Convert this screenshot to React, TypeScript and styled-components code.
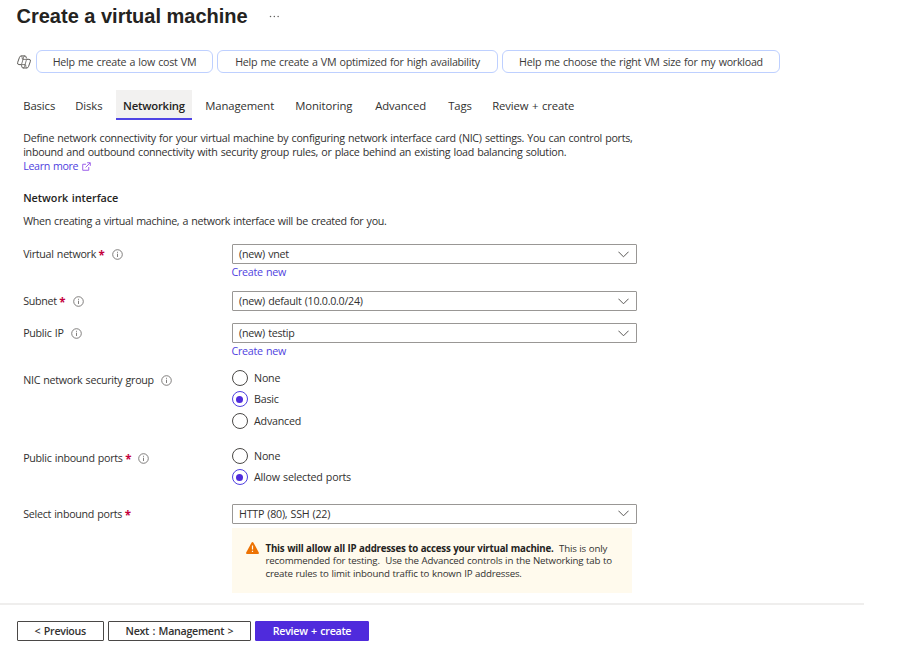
import React from 'react';
import styled, { createGlobalStyle } from 'styled-components';

const Global = createGlobalStyle`
  * { box-sizing: border-box; }
  body {
    margin: 0;
    background: #fff;
    color: #323130;
    font-family: "Open Sans", "Noto Sans", sans-serif;
    font-size: 10.7px;
    letter-spacing: -0.28px;
    word-spacing: 0.7px;
    overflow: hidden;
  }
`;

const Page = styled.div`
  width: 910px;
  height: 669px;
  display: flex;
  flex-direction: column;
`;

const Header = styled.header`
  display: flex;
  align-items: center;
  height: 32px;
  padding-left: 16.5px;
`;

const Title = styled.h1`
  margin: 0;
  width: 252.5px;
  font: bold 20px "Liberation Sans", Arial, sans-serif;
  letter-spacing: 0;
  word-spacing: 0;
  color: #242321;
`;

const Dots = styled.svg`
  display: block;
  fill: #605e5c;
`;

const Suggestions = styled.div`
  display: flex;
  align-items: center;
  gap: 4px;
  height: 23px;
  margin-top: 18px;
  padding-left: 17px;
`;

const CopilotIcon = styled.svg`
  display: block;
  margin-right: 1px;
  fill: none;
  stroke: #55534f;
  stroke-linejoin: round;
`;

const Chip = styled.button<{ $width: number }>`
  width: ${(p) => p.$width}px;
  height: 23px;
  padding: 0;
  border: 1px solid #bed0ff;
  border-radius: 6px;
  background: #fff;
  color: #3b3a39;
  font: inherit;
  letter-spacing: -0.26px;
  word-spacing: 0.7px;
  white-space: nowrap;
`;

const Tabs = styled.nav`
  display: grid;
  grid-template-columns: 52px 48px 82px 90px 80px 73px 44px 100px;
  height: 30px;
  margin: 17px 0 0 16px;
`;

const Tab = styled.a<{ $active?: boolean }>`
  justify-self: start;
  height: 30px;
  padding: 0 0 0 7.2px;
  line-height: 31px;
  font-size: 11.3px;
  letter-spacing: -0.1px;
  white-space: nowrap;
  ${(p) =>
    p.$active &&
    `width: 76px; padding-left: 7px; font-weight: 600; letter-spacing: -0.2px; color: #242321;
     background: #f2f1f0; border-bottom: 2px solid #4f44e4;`}
`;

const Content = styled.main`
  padding-left: 23.2px;
  height: 483px;
`;

const Intro = styled.p`
  margin: 11px 0 0;
  height: 43px;
  line-height: 14.2px;
  white-space: nowrap;
`;

const Link = styled.a`
  color: #4f3fe0;
`;

const LearnMore = styled(Link)`
  letter-spacing: -0.36px;
`;

const ExternalIcon = styled.svg`
  margin-left: 4px;
  vertical-align: -1px;
  fill: none;
  stroke: #9350e8;
`;

const Heading = styled.h2`
  margin: 15.5px 0 0;
  font-size: 10.8px;
  font-weight: 600;
  line-height: 16px;
  letter-spacing: -0.02px;
  color: #242321;
`;

const Note = styled.p`
  margin: 7.5px 0 0;
  height: 31px;
  line-height: 16px;
  letter-spacing: -0.31px;
`;

const Field = styled.section<{ $height: number }>`
  display: grid;
  grid-template-columns: 208.4px 405.4px;
  align-items: start;
  height: ${(p) => p.$height}px;
`;

const Label = styled.label`
  display: flex;
  align-items: center;
  height: 20px;
`;

const Required = styled.span`
  margin-left: 2.5px;
  padding-top: 3px;
  color: #c4003c;
  font-size: 11.5px;
  font-weight: 700;
  line-height: 17px;
`;

const InfoIcon = styled.svg`
  margin: 1px 0 0 7.3px;
  fill: none;
  stroke: #73716f;
`;

const Select = styled.div`
  display: flex;
  align-items: center;
  justify-content: space-between;
  height: 20px;
  padding: 0 6.5px;
  border: 1px solid #999795;
  border-radius: 1px;
  letter-spacing: -0.26px;
`;

const Chevron = styled.svg`
  display: block;
  fill: none;
  stroke: #5a5856;
`;

const CreateNew = styled(Link)`
  display: block;
  line-height: 16px;
`;

const Radios = styled.div`
  display: flex;
  flex-direction: column;
  gap: 5.8px;
`;

const RadioRow = styled.label`
  display: flex;
  align-items: center;
  gap: 6.5px;
  height: 16px;
  line-height: 14px;
  letter-spacing: -0.22px;
`;

const Circle = styled.span<{ $on?: boolean }>`
  display: grid;
  place-items: center;
  width: 16px;
  height: 16px;
  border: 1px solid ${(p) => (p.$on ? '#4f3fe0' : '#4a4846')};
  border-radius: 50%;

  &::after {
    content: '';
    width: 7px;
    height: 7px;
    border-radius: 50%;
    background: ${(p) => (p.$on ? '#4f2bdc' : 'transparent')};
  }
`;

const Warning = styled.div`
  display: flex;
  width: 400px;
  height: 65.5px;
  margin-top: 4px;
  padding: 14px 0 0 14px;
  gap: 7px;
  background: #fffaed;
  font-size: 9.7px;
  line-height: 12.7px;
  letter-spacing: -0.18px;
  word-spacing: 0.4px;
  white-space: pre;

  b {
    letter-spacing: -0.22px;
    color: #242321;
  }
`;

const WarningText = styled.div`
  padding-top: 1px;
`;

const Footer = styled.footer`
  display: flex;
  gap: 4px;
  width: 864px;
  padding: 16px 0 0 16.5px;
  border-top: 2px solid #efeeed;
`;

const Button = styled.button<{ $width: number; $primary?: boolean }>`
  width: ${(p) => p.$width}px;
  height: 20px;
  padding: 0 0 1px;
  border: 1px solid ${(p) => (p.$primary ? '#4f2bdc' : '#4a4846')};
  border-radius: 1px;
  background: ${(p) => (p.$primary ? '#4f2bdc' : '#fff')};
  color: ${(p) => (p.$primary ? '#fff' : '#323130')};
  font: inherit;
  font-weight: 600;
  letter-spacing: -0.3px;
  word-spacing: 1px;
  white-space: nowrap;
`;

const Info = () => (
  <InfoIcon width="11" height="11" viewBox="0 0 11 11">
    <circle cx="5.5" cy="5.5" r="4.8" strokeWidth="0.9" />
    <path d="M5.5 4.7V8M5.5 2.8v1" strokeWidth="0.9" />
  </InfoIcon>
);

const Dropdown = ({ value }: { value: string }) => (
  <Select>
    {value}
    <Chevron width="11" height="7" viewBox="0 0 11 7">
      <path d="M.4.7 5.5 5.8 10.6.7" />
    </Chevron>
  </Select>
);

const Radio = ({ text, on }: { text: string; on?: boolean }) => (
  <RadioRow>
    <Circle $on={on} />
    {text}
  </RadioRow>
);

const tabs = ['Basics', 'Disks', 'Networking', 'Management', 'Monitoring', 'Advanced', 'Tags', 'Review + create'];

export default function App() {
  return (
    <Page>
      <Global />
      <Header>
        <Title>Create a virtual machine</Title>
        <Dots width="11" height="3" viewBox="0 0 11 3">
          <circle cx="1.5" cy="1.5" r=".75" />
          <circle cx="5.3" cy="1.5" r=".75" />
          <circle cx="9.1" cy="1.5" r=".75" />
        </Dots>
      </Header>
      <Suggestions>
        <CopilotIcon width="14" height="14" viewBox="0 0 14 14">
          <path d="M4.3.9h3.6q1 0 1.2 1.100l.3 1.400M4.300.9Q3 .9 2.500 2.300L.7 7.300Q.1 9.600 1.900 9.600h2M9.700 13H6.100q-1 0-1.200-1.100l-.4-1.700M9.700 13q1.300 0 1.800-1.400l1.800-5q.6-2.300-1.200-2.300h-2" strokeWidth=".95" />
          <path d="M7.900.9Q7 .9 6.600 2.200L4.900 8.300Q4.500 9.600 3.500 9.600M6.100 13q1 0 1.400-1.300l1.700-6.100q.4-1.300 1.400-1.300M5.800 4.400h4.300M3.900 9.600h4.200M4.300 1q.8.200.8 1.300l.3 2M9.700 12.900q-.8-.2-.8-1.300l-.3-2" strokeWidth=".75" />
        </CopilotIcon>
        <Chip $width={177}>Help me create a low cost VM</Chip>
        <Chip $width={281}>Help me create a VM optimized for high availability</Chip>
        <Chip $width={278}>Help me choose the right VM size for my workload</Chip>
      </Suggestions>
      <Tabs>
        {tabs.map((t) => (
          <Tab key={t} $active={t === 'Networking'}>{t}</Tab>
        ))}
      </Tabs>
      <Content>
        <Intro>
          Define network connectivity for your virtual machine by configuring network interface card (NIC) settings. You can control ports,
          <br />
          inbound and outbound connectivity with security group rules, or place behind an existing load balancing solution.
          <br />
          <LearnMore>
            Learn more
            <ExternalIcon width="9" height="9" viewBox="0 0 10 10">
              <path d="M4.5 2.5H.8v6.700h6.700V5.500M4 6l5-5M5.700.8h3.500v3.500" />
            </ExternalIcon>
          </LearnMore>
        </Intro>
        <Heading>Network interface</Heading>
        <Note>When creating a virtual machine, a network interface will be created for you.</Note>
        <Field $height={47}>
          <Label>Virtual network<Required>*</Required><Info /></Label>
          <div>
            <Dropdown value="(new) vnet" />
            <CreateNew>Create new</CreateNew>
          </div>
        </Field>
        <Field $height={32}>
          <Label>Subnet<Required>*</Required><Info /></Label>
          <Dropdown value="(new) default (10.0.0.0/24)" />
        </Field>
        <Field $height={46.5}>
          <Label>Public IP<Info /></Label>
          <div>
            <Dropdown value="(new) testip" />
            <CreateNew>Create new</CreateNew>
          </div>
        </Field>
        <Field $height={78}>
          <Label>NIC network security group<Info /></Label>
          <Radios>
            <Radio text="None" />
            <Radio text="Basic" on />
            <Radio text="Advanced" />
          </Radios>
        </Field>
        <Field $height={56}>
          <Label>Public inbound ports<Required>*</Required><Info /></Label>
          <Radios>
            <Radio text="None" />
            <Radio text="Allow selected ports" on />
          </Radios>
        </Field>
        <Field $height={90}>
          <Label>Select inbound ports<Required>*</Required></Label>
          <div>
            <Dropdown value="HTTP (80), SSH (22)" />
            <Warning>
              <svg width="13" height="12" viewBox="0 0 13 12">
                <path d="M6.5 0Q7.100 0 7.500.7l5.300 9.800q.5 1.500-.8 1.500H1Q-.3 12 .2 10.500L5.500.7Q5.900 0 6.500 0Z" fill="#ed7203" />
                <path d="M6.5 3.5v4M6.500 8.700v1.300" stroke="#fffaed" strokeWidth="1.2" />
              </svg>
              <WarningText>
                <b>This will allow all IP addresses to access your virtual machine.</b>{'  This is only\n'}
                {'recommended for testing.  Use the Advanced controls in the Networking tab to\n'}
                {'create rules to limit inbound traffic to known IP addresses.'}
              </WarningText>
            </Warning>
          </div>
        </Field>
      </Content>
      <Footer>
        <Button $width={87.5}>&lt; Previous</Button>
        <Button $width={143}>Next : Management &gt;</Button>
        <Button $width={114} $primary>Review + create</Button>
      </Footer>
    </Page>
  );
}
